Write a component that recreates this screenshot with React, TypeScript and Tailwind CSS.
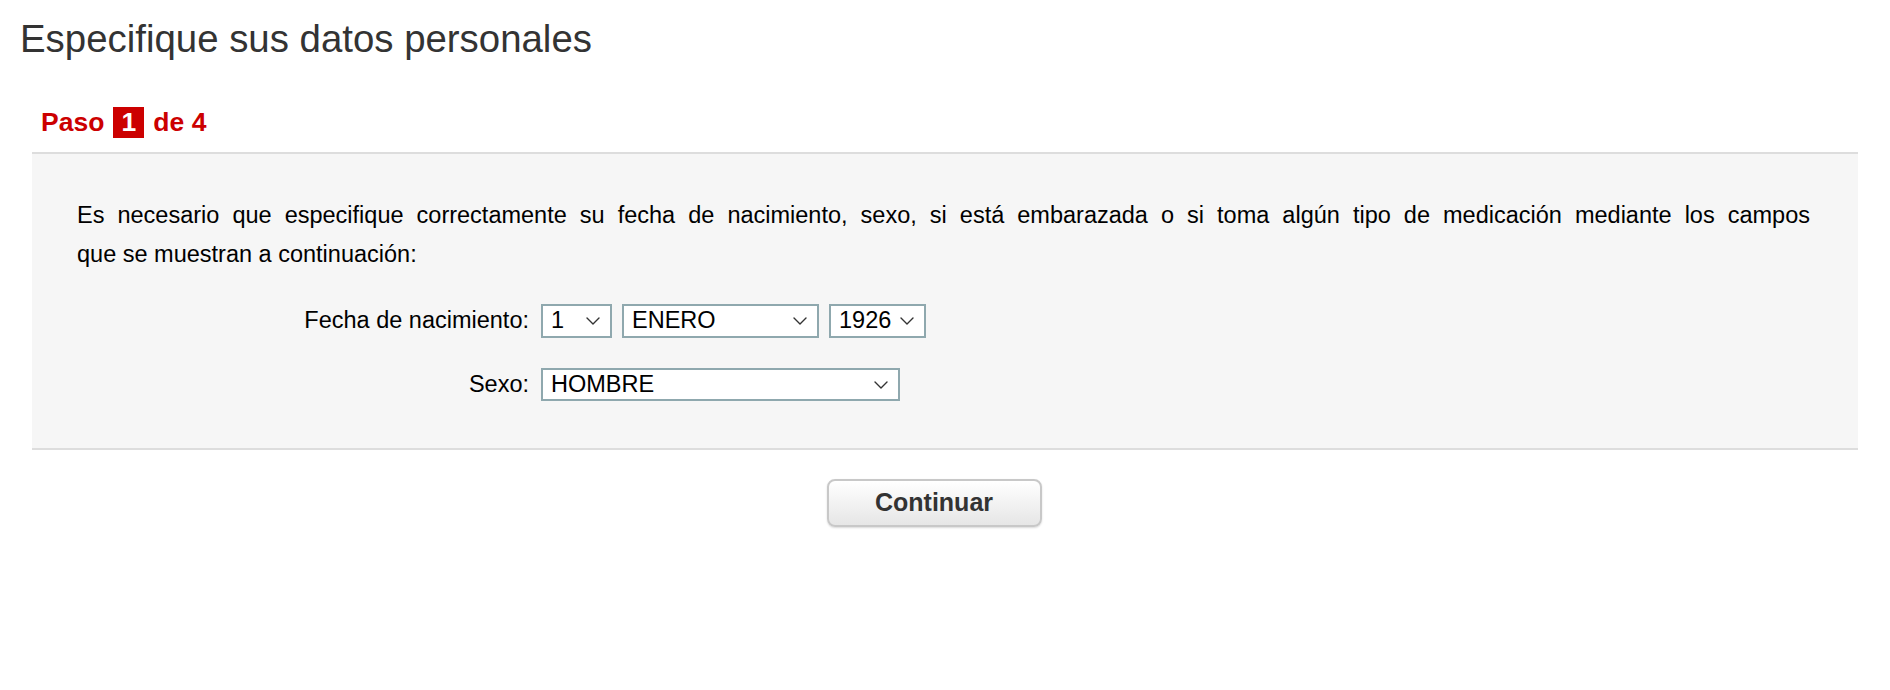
function Chevron() {
  return (
    <svg width="14" height="8" viewBox="0 0 14 8" fill="none" className="shrink-0">
      <path d="M1 1 L7 7 L13 1" stroke="#333" strokeWidth="1.4" strokeLinecap="round" strokeLinejoin="round" />
    </svg>
  );
}

function FakeSelect({ value, width, height = 34 }: { value: string; width: string; height?: number }) {
  return (
    <div
      role="combobox"
      className={`${width} flex items-center justify-between border-2 border-[#8fa8ae] bg-white pl-[8px] pr-[10px] text-[23.5px] text-black`}
      style={{ height }}
    >
      <span className="leading-none">{value}</span>
      <Chevron />
    </div>
  );
}

export default function App() {
  return (
    <div className="min-h-screen bg-white font-['Liberation_Sans',Arial,sans-serif]">
      <h1 className="pl-[20px] pt-[17px] text-[38.4px] leading-[44px] text-[#333]">Especifique sus datos personales</h1>

      <div className="mx-[32px] mt-[46px]">
        <div className="flex h-[31px] items-center pl-[9px] text-[26.5px] font-bold leading-[31px] text-[#cc0000]">
          <span>Paso</span>
          <span className="ml-[9px] flex h-[31px] w-[31px] items-center justify-center bg-[#cc0000] text-white">1</span>
          <span className="ml-[9px]">de 4</span>
        </div>

        <div className="mt-[14px] border-y-2 border-[#dddddd] bg-[#f6f6f6] pb-[47px] pl-[45px] pr-[48px] pt-[42px]">
          <p className="text-[23.5px] leading-[39px] text-black">
            <span className="block text-justify [text-align-last:justify]">
              Es necesario que especifique correctamente su fecha de nacimiento, sexo, si está embarazada o si toma algún tipo de medicación mediante los campos
            </span>
            <span className="block">que se muestran a continuación:</span>
          </p>

          <div className="mt-[30px] flex h-[34px] items-center">
            <label className="w-[452px] text-right text-[23.5px] text-black">Fecha de nacimiento:</label>
            <div className="ml-[12px] flex gap-[10px]">
              <FakeSelect value="1" width="w-[71px]" />
              <FakeSelect value="ENERO" width="w-[197px]" />
              <FakeSelect value="1926" width="w-[97px]" />
            </div>
          </div>

          <div className="mt-[30px] flex h-[33px] items-center">
            <label className="w-[452px] text-right text-[23.5px] text-black">Sexo:</label>
            <div className="ml-[12px]">
              <FakeSelect value="HOMBRE" width="w-[359px]" height={33} />
            </div>
          </div>
        </div>

        <div className="mt-[29px] flex justify-center pr-[22px]">
          <button className="h-[48px] w-[215px] rounded-[8px] border-2 border-[#c8c8c8] bg-gradient-to-b from-white to-[#e6e6e6] text-[25px] font-bold text-[#333] shadow-[0_1px_2px_rgba(0,0,0,0.15)]">
            Continuar
          </button>
        </div>
      </div>
    </div>
  );
}
